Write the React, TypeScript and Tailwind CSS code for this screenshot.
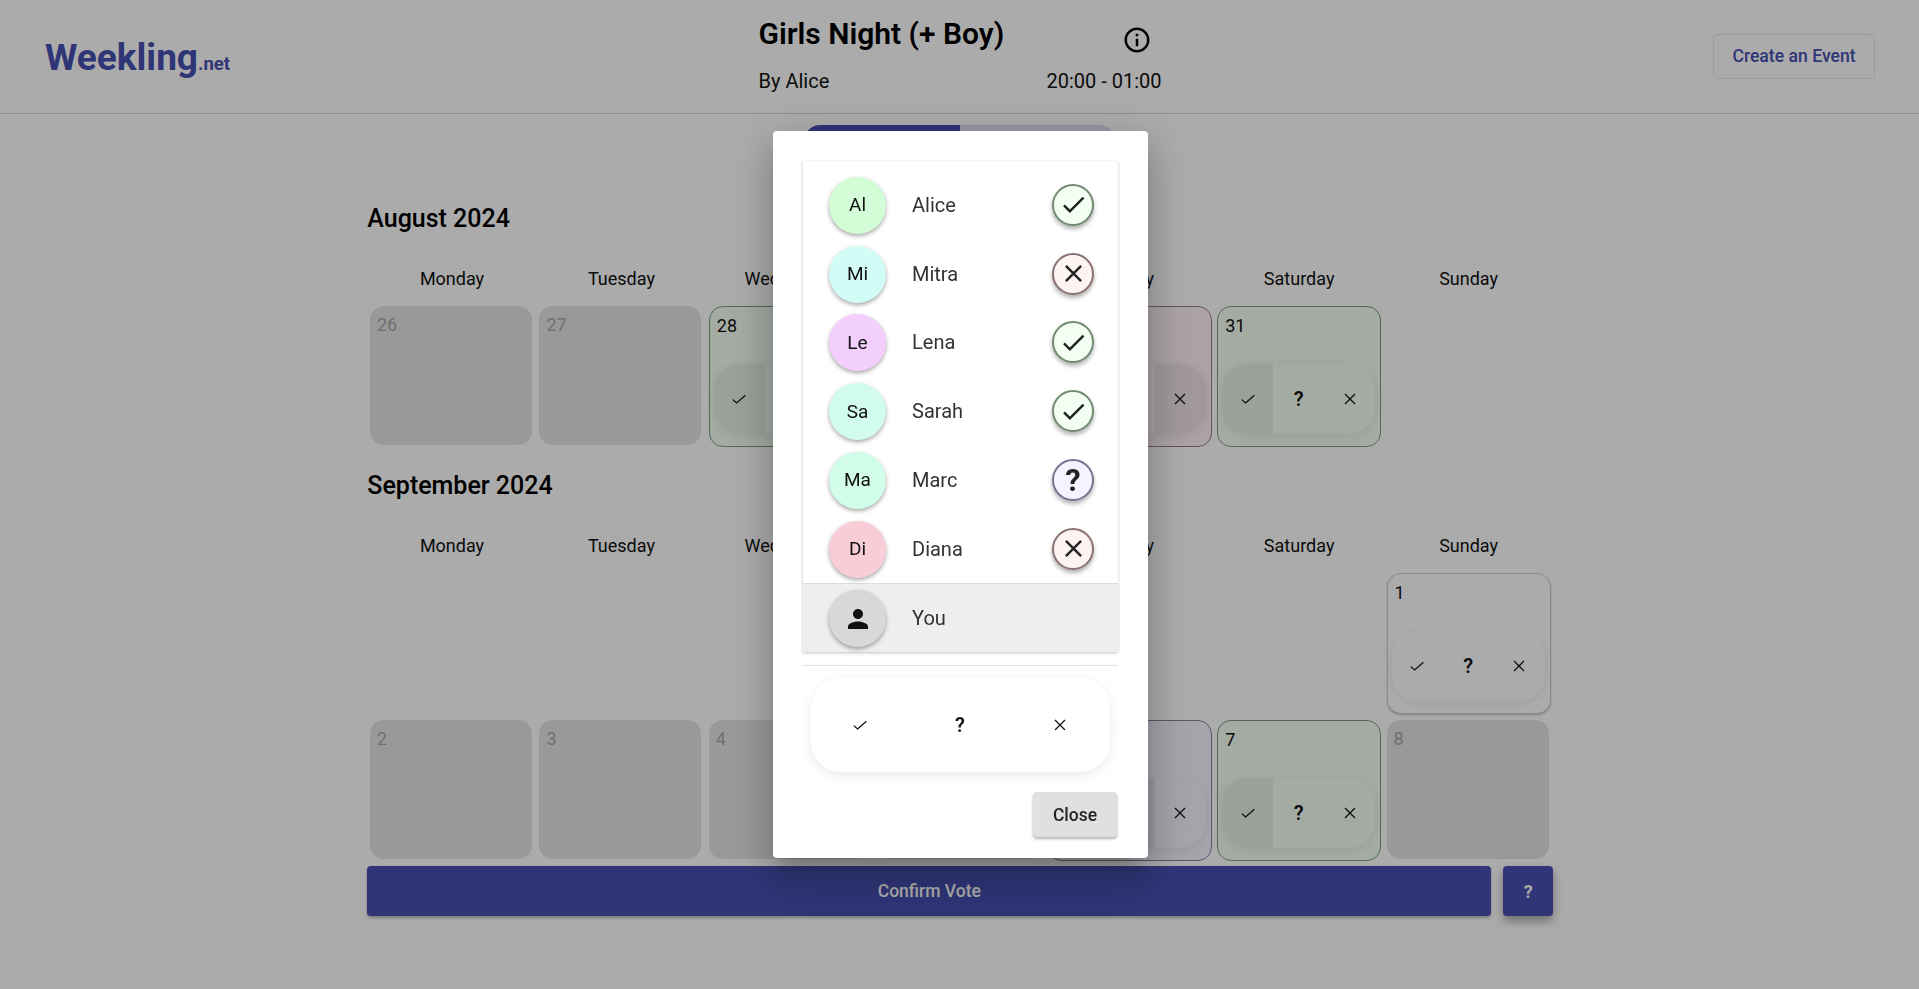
import React from "react";

type Vote = "yes" | "maybe" | "no";
type Day = { n?: number; kind?: "empty" | "off" | "none" | Vote };

const WEEKDAYS = ["Monday", "Tuesday", "Wednesday", "Thursday", "Friday", "Saturday", "Sunday"];

const AUGUST: Day[] = [
  { n: 26, kind: "off" },
  { n: 27, kind: "off" },
  { n: 28, kind: "yes" },
  { n: 29, kind: "yes" },
  { n: 30, kind: "no" },
  { n: 31, kind: "yes" },
  { kind: "empty" },
];

const SEPTEMBER: Day[] = [
  { kind: "empty" },
  { kind: "empty" },
  { kind: "empty" },
  { kind: "empty" },
  { kind: "empty" },
  { kind: "empty" },
  { n: 1, kind: "none" },
  { n: 2, kind: "off" },
  { n: 3, kind: "off" },
  { n: 4, kind: "off" },
  { n: 5, kind: "off" },
  { n: 6, kind: "maybe" },
  { n: 7, kind: "yes" },
  { n: 8, kind: "off" },
];

const PEOPLE: { short: string; name: string; color: string; vote: Vote }[] = [
  { short: "Al", name: "Alice", color: "bg-[#d3fdd6]", vote: "yes" },
  { short: "Mi", name: "Mitra", color: "bg-[#d2fdf7]", vote: "no" },
  { short: "Le", name: "Lena", color: "bg-[#f3cffd]", vote: "yes" },
  { short: "Sa", name: "Sarah", color: "bg-[#d2fdee]", vote: "yes" },
  { short: "Ma", name: "Marc", color: "bg-[#d2fde8]", vote: "maybe" },
  { short: "Di", name: "Diana", color: "bg-[#f9cdd8]", vote: "no" },
];

function ThinCheck() {
  return (
    <svg width="16" height="16" viewBox="0 0 16 16" fill="none" stroke="currentColor" strokeWidth="1.25">
      <path d="M1.8 8.6 L5.6 12 L14.4 4.2" />
    </svg>
  );
}

function ThinX() {
  return (
    <svg width="16" height="16" viewBox="0 0 16 16" fill="none" stroke="currentColor" strokeWidth="1.25">
      <path d="M3 3 L13 13 M13 3 L3 13" />
    </svg>
  );
}

function VoteToggle({ selected, size }: { selected?: Vote; size: "cell" | "dialog" }) {
  const seg = (v: Vote) =>
    `flex flex-1 items-center justify-center text-[#111] ${selected === v ? "bg-black/[0.06]" : ""}`;
  const wrap =
    size === "cell"
      ? "flex h-[70px] w-[153px] overflow-hidden rounded-[26px] shadow-[0_2px_10px_rgba(0,0,0,0.07)]"
      : "flex h-[94px] w-[299px] overflow-hidden rounded-[30px] bg-white shadow-[0_3px_12px_rgba(0,0,0,0.09)]";
  return (
    <div className={wrap}>
      <div className={seg("yes")}>
        <ThinCheck />
      </div>
      <div className={seg("maybe")}>
        <span className="text-[20px] font-semibold leading-none">?</span>
      </div>
      <div className={seg("no")}>
        <ThinX />
      </div>
    </div>
  );
}

function Cell({ day }: { day: Day }) {
  if (day.kind === "empty") return <div />;
  if (day.kind === "off") {
    return (
      <div className="mx-auto h-[139px] w-[162px] -translate-x-px rounded-[14px] bg-[#e4e4e4] px-[7px] py-[5px] text-[18px] leading-[27px] text-[#a8a8a8]">
        {day.n}
      </div>
    );
  }
  const tone =
    day.kind === "yes"
      ? "bg-[#f3fff3] border-[#7f9a7f]"
      : day.kind === "no"
        ? "bg-[#fff3f3] border-[#9a7f7f]"
        : day.kind === "maybe"
          ? "bg-[#f8f3ff] border-[#8c7f9a]"
          : "bg-white border-[#d0d0d0] shadow-[0_1px_2px_rgba(0,0,0,0.25)]";
  return (
    <div className={`mx-auto flex h-[141px] w-[164px] flex-col justify-between rounded-[14px] border px-[4px] pb-[12px] ${tone}`}>
      <div className="px-[3px] pt-[5px] text-[18px] leading-[27px] text-[#111]">{day.n}</div>
      <VoteToggle size="cell" selected={day.kind === "none" ? undefined : (day.kind as Vote)} />
    </div>
  );
}

function Month({ title, days, className }: { title: string; days: Day[]; className: string }) {
  return (
    <section className={className}>
      <h2 className="flex h-[36px] items-center pt-[2px] text-[25px] font-medium text-black">{title}</h2>
      <div className="mt-[29px] grid grid-cols-7">
        {WEEKDAYS.map((d) => (
          <div key={d} className="h-[28px] text-center text-[18px] leading-[28px] text-[#111]">
            {d}
          </div>
        ))}
      </div>
      <div className="mt-[13px] grid grid-cols-7 gap-y-[6px]">
        {days.map((d, i) => (
          <Cell key={i} day={d} />
        ))}
      </div>
    </section>
  );
}

function StatusIcon({ vote }: { vote: Vote }) {
  const tone =
    vote === "yes"
      ? "bg-[#f3fff3] border-[#718b71]"
      : vote === "no"
        ? "bg-[#fdf3f2] border-[#8b7171]"
        : "bg-[#f7f2ff] border-[#7b7190]";
  return (
    <div className={`flex h-[42px] w-[42px] items-center justify-center rounded-full border-2 text-[#222] shadow-[0_3px_4px_rgba(0,0,0,0.3)] ${tone}`}>
      {vote === "yes" && (
        <svg width="29" height="29" viewBox="0 0 24 24" fill="currentColor">
          <path d="M9 16.17 4.83 12l-1.42 1.41L9 19 21 7l-1.41-1.41z" />
        </svg>
      )}
      {vote === "no" && (
        <svg width="29" height="29" viewBox="0 0 24 24" fill="currentColor">
          <path d="M19 6.41 17.59 5 12 10.59 6.41 5 5 6.41 10.59 12 5 17.59 6.41 19 12 13.41 17.59 19 19 17.59 13.41 12z" />
        </svg>
      )}
      {vote === "maybe" && <span className="text-[31px] font-bold leading-none">?</span>}
    </div>
  );
}

function Avatar({ color, children }: { color: string; children: React.ReactNode }) {
  return (
    <div className={`mt-px flex h-[57px] w-[57px] items-center justify-center rounded-full text-[19px] text-[#111] shadow-[0_2px_4px_rgba(0,0,0,0.35)] ${color}`}>
      {children}
    </div>
  );
}

export default function App() {
  return (
    <div className="relative min-h-[989px] overflow-hidden bg-white [font-family:Roboto,sans-serif]">
      <header className="grid h-[114px] grid-cols-[1fr_404px_1fr] border-b border-[#d5d5d5]">
        <div className="pl-[45px] pt-[35px] font-bold leading-[46px] text-[#464fb1]">
          <span className="text-[37px]">Weekling</span>
          <span className="text-[18.5px]">.net</span>
        </div>
        <div className="pl-px pt-[16px] text-black">
          <div className="flex h-[36px] items-start justify-between">
            <h1 className="text-[30px] font-semibold leading-[36px]">Girls Night (+ Boy)</h1>
            <svg className="mr-[10px] mt-[9px]" width="30" height="30" viewBox="0 0 24 24" fill="currentColor">
              <path d="M11 7h2v2h-2zm0 4h2v6h-2zm1-9C6.48 2 2 6.48 2 12s4.48 10 10 10 10-4.48 10-10S17.52 2 12 2zm0 18c-4.41 0-8-3.59-8-8s3.59-8 8-8 8 3.59 8 8-3.59 8-8 8z" />
            </svg>
          </div>
          <div className="mt-[17px] flex justify-between text-[20px] leading-[24px] text-[#111]">
            <span>By Alice</span>
            <span>20:00 - 01:00</span>
          </div>
        </div>
        <div className="flex justify-end pr-[44px] pt-[34px]">
          <button className="h-[45px] w-[162px] rounded border border-[#e8e8e8] text-[17.6px] font-medium text-[#464fb1]">
            Create an Event
          </button>
        </div>
      </header>

      <div className="mt-[11px] flex justify-center">
        <div className="flex h-[48px] w-[311px] overflow-hidden rounded-t-[16px]">
          <div className="flex-1 bg-[#464fb1]" />
          <div className="flex-1 bg-[#dedcf0]" />
        </div>
      </div>

      <main className="ml-[367.3px] w-[1186px]">
        <Month title="August 2024" days={AUGUST} className="mt-[27px]" />
        <Month title="September 2024" days={SEPTEMBER} className="mt-[20px]" />
        <div className="mt-[5px] flex gap-[12px]">
          <button className="h-[50px] flex-1 rounded bg-[#464fb1] text-[17.5px] font-medium text-white shadow-[0_2px_3px_rgba(0,0,0,0.3)]">
            Confirm Vote
          </button>
          <button className="h-[50px] w-[50px] rounded bg-[#464fb1] text-[18px] font-bold text-white shadow-[0_5px_10px_rgba(0,0,0,0.35)]">
            ?
          </button>
        </div>
      </main>

      <div className="fixed inset-0 flex items-center justify-center bg-black/[0.33]">
        <div className="h-[727px] w-[375px] translate-x-px rounded bg-white px-[30px] py-[30px] shadow-[0_11px_15px_-7px_rgba(0,0,0,0.2),0_24px_38px_3px_rgba(0,0,0,0.14),0_9px_46px_8px_rgba(0,0,0,0.12)]">
          <div className="pt-[9.5px] shadow-[0_1px_3px_rgba(0,0,0,0.25)]">
            {PEOPLE.map((p) => (
              <div key={p.name} className="flex h-[68.8px] items-center pl-[26px] pr-[24px]">
                <Avatar color={p.color}>{p.short}</Avatar>
                <span className="ml-[26px] flex-1 text-[20px] text-[#333]">{p.name}</span>
                <StatusIcon vote={p.vote} />
              </div>
            ))}
            <div className="flex h-[69px] items-center border-t border-[#dcdcdc] bg-[#eeeeee] pl-[26px]">
              <Avatar color="bg-[#d8d8d8]">
                <svg width="30" height="30" viewBox="0 0 24 24" fill="#111">
                  <path d="M12 12c2.21 0 4-1.79 4-4s-1.79-4-4-4-4 1.79-4 4 1.79 4 4 4zm0 2c-2.67 0-8 1.34-8 4v2h16v-2c0-2.66-5.33-4-8-4z" />
                </svg>
              </Avatar>
              <span className="ml-[26px] text-[20px] text-[#333]">You</span>
            </div>
          </div>
          <div className="mt-[13px] border-t border-[#e0e0e0]" />
          <div className="mt-[12px] flex pl-[7.5px]">
            <VoteToggle size="dialog" />
          </div>
          <div className="mt-[20px] flex justify-end pr-px">
            <button className="h-[45px] w-[84px] rounded bg-[#e0e0e0] text-[17.5px] font-medium text-[#222] shadow-[0_2px_3px_rgba(0,0,0,0.3)]">
              Close
            </button>
          </div>
        </div>
      </div>
    </div>
  );
}
